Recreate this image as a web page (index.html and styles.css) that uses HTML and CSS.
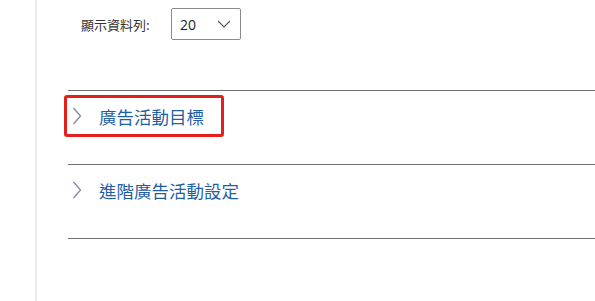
FILE: index.html
```html
<!DOCTYPE html>
<html lang="zh-Hant">
<head>
<meta charset="utf-8">
<link rel="stylesheet" href="styles.css">
</head>
<body>
<div class="page">
  <div class="rail"></div>
  <div class="main">
    <div class="filter">
      <span class="label">顯示資料列:</span>
      <div class="select">
        <span class="value">20</span>
        <svg class="caret" width="14" height="8" viewBox="0 0 14 8"><path d="M1 1 L7 7 L13 1" fill="none" stroke="#555" stroke-width="1.1"/></svg>
      </div>
    </div>
    <div class="section">
      <div class="head">
        <svg class="chev" width="10" height="18" viewBox="0 0 10 18"><path d="M1.5 1 L8.5 9 L1.5 17" fill="none" stroke="#7d87a8" stroke-width="1.3"/></svg>
        <span class="title">廣告活動目標</span>
        <div class="highlight"></div>
      </div>
    </div>
    <div class="section">
      <div class="head">
        <svg class="chev" width="10" height="18" viewBox="0 0 10 18"><path d="M1.5 1 L8.5 9 L1.5 17" fill="none" stroke="#7d87a8" stroke-width="1.3"/></svg>
        <span class="title">進階廣告活動設定</span>
      </div>
    </div>
    <div class="section end"></div>
  </div>
</div>
</body>
</html>
```
FILE: styles.css
```css
html, body {
  margin: 0;
  padding: 0;
  background: #fff;
  font-family: "Noto Sans CJK TC", "Noto Sans", sans-serif;
}
.page {
  display: flex;
  height: 301px;
  overflow: hidden;
}
.rail {
  width: 35px;
  border-right: 2px solid #ececec;
  flex: none;
}
.main {
  flex: 1;
  padding-left: 31px;
}
.filter {
  display: flex;
  align-items: center;
  height: 48px;
  padding-left: 13px;
  box-sizing: border-box;
  padding-top: 0;
}
.label {
  font-size: 13px;
  color: #333;
  width: 90px;
}
.select {
  display: flex;
  align-items: center;
  justify-content: space-between;
  width: 70px;
  height: 32px;
  box-sizing: border-box;
  border: 1px solid #8a8a8a;
  border-radius: 2px;
  padding: 0 9px 0 8px;
  margin-top: 0;
}
.value {
  font-family: "Open Sans", "Noto Sans", sans-serif;
  font-size: 14px;
  color: #222;
}
.section {
  margin-top: 0;
  height: 74px;
  box-sizing: border-box;
  border-top: 1px solid #6e6e6e;
}
.filter + .section {
  margin-top: 42px;
}
.section.end {
  height: 40px;
}
.head {
  position: relative;
  display: flex;
  align-items: center;
  height: 42px;
  margin-top: 4px;
  padding-left: 4px;
}
.chev {
  flex: none;
}
.title {
  margin-left: 17px;
  font-size: 17.5px;
  color: #1f5fa6;
  white-space: nowrap;
}
.highlight {
  position: absolute;
  left: -4px;
  top: 0;
  width: 160px;
  height: 42px;
  box-sizing: border-box;
  border: 3px solid #e5201c;
  border-radius: 3px;
}
```
